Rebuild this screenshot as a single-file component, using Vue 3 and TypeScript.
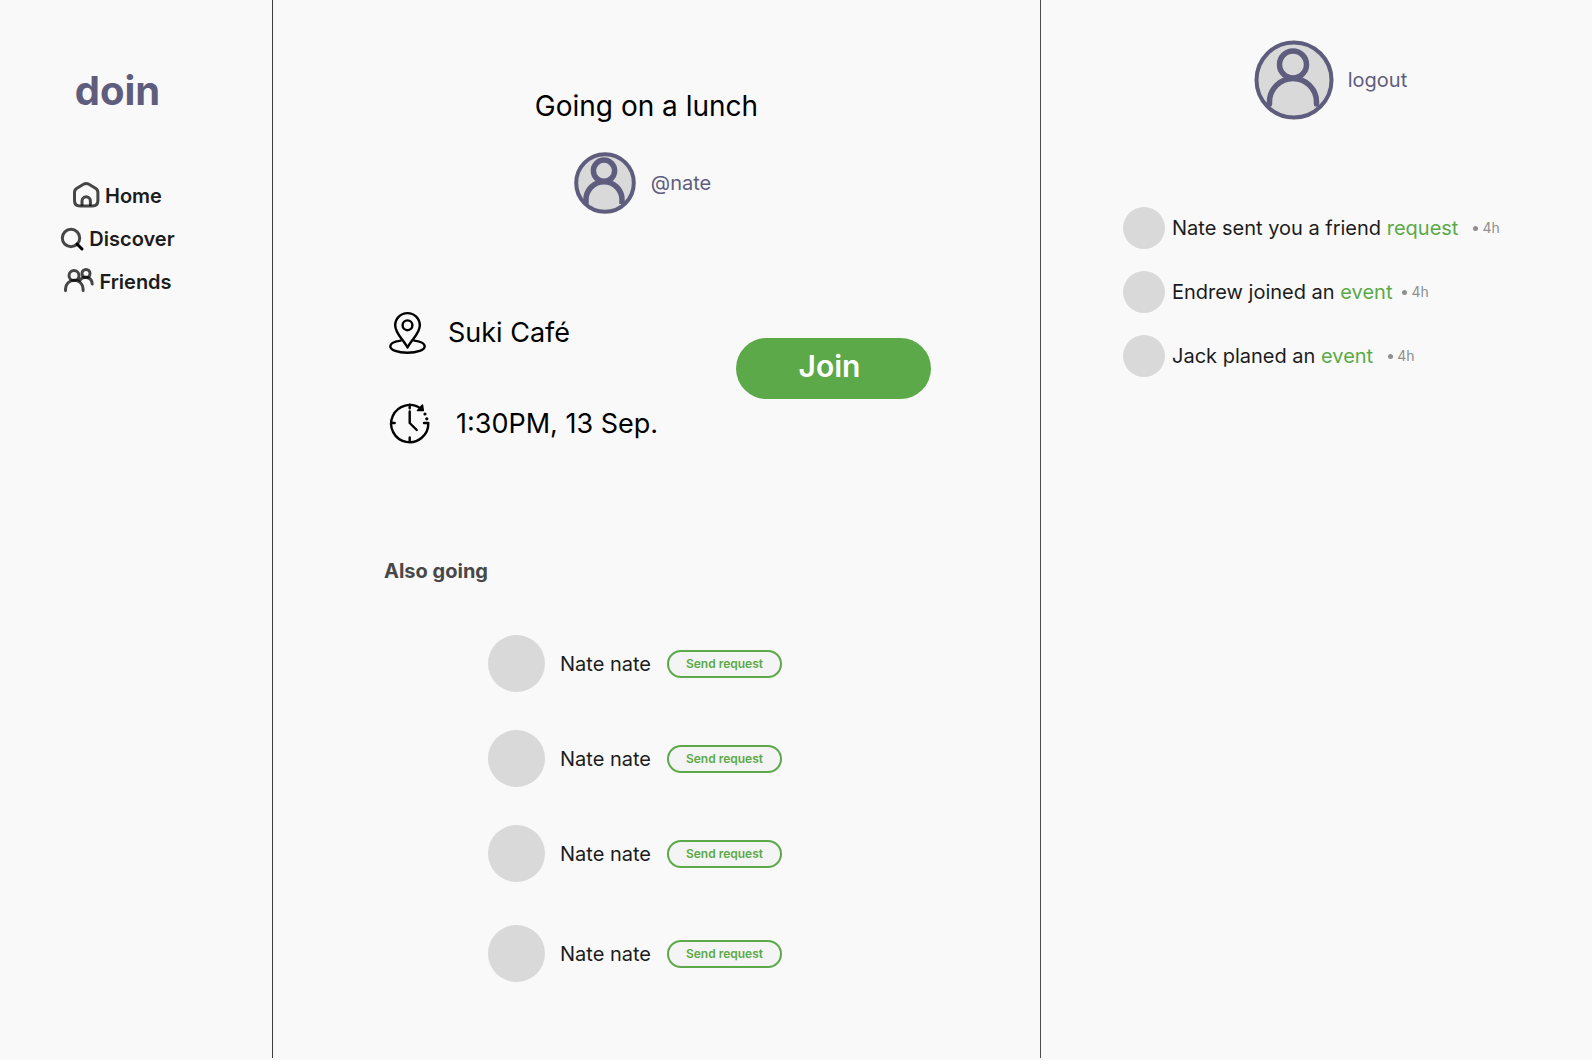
<script setup lang="ts">
import { ref } from 'vue'

interface Notice {
  id: number
  text: string
  link: string
  age: string
  tight?: boolean
}

const notices: Notice[] = [
  { id: 1, text: 'Nate sent you a friend', link: 'request', age: '4h' },
  { id: 2, text: 'Endrew joined an', link: 'event', age: '4h', tight: true },
  { id: 3, text: 'Jack planed an', link: 'event', age: '4h' },
]

const attendees = ref([
  { id: 1, name: 'Nate nate' },
  { id: 2, name: 'Nate nate' },
  { id: 3, name: 'Nate nate' },
  { id: 4, name: 'Nate nate' },
])
</script>

<template>
  <div class="page">
    <aside class="sidebar">
      <a class="brand" href="#">doin</a>
      <nav class="nav" aria-label="Main">
        <a class="nav-link" href="#home">
          <svg class="glyph" width="27" height="26" viewBox="0 0 27 26" aria-hidden="true">
            <path d="M1.500 9.500c0-2 .8-3.400 2.400-4.300l6.600-3.900c1.800-1 3.600-1 5.400 0l6.600 3.900c1.600.9 2.400 2.300 2.400 4.300v8c0 3.600-2 5.500-5.500 5.500H7c-3.500 0-5.500-1.900-5.500-5.500z" />
            <path d="M9 21.500v-3.500a4.200 4.200 0 0 1 8.400 0v3.500" />
          </svg>
          Home
        </a>
        <a class="nav-link" href="#discover">
          <svg class="glyph" width="24" height="24" viewBox="0 0 24 24" aria-hidden="true">
            <circle cx="11" cy="11" r="8.700" />
            <path class="handle" d="M17 17l5 5" />
          </svg>
          Discover
        </a>
        <a class="nav-link" href="#friends">
          <svg class="glyph" width="31" height="26" viewBox="0 0 31 26" aria-hidden="true">
            <circle cx="11" cy="6.500" r="5" />
            <path d="M2.500 21.500v-1.500a8.800 8.800 0 0 1 17.600 0v1.500" />
            <circle cx="23" cy="4.500" r="4" />
            <path d="M16.500 11.500c4-5.500 12.500-3.500 12.700 3.500" />
          </svg>
          Friends
        </a>
      </nav>
    </aside>

    <main class="event">
      <header class="event-head">
        <h1 class="title">Going on a lunch</h1>
        <a class="host" href="#nate">
          <svg width="62" height="62" viewBox="0 0 62 62" aria-hidden="true">
            <circle class="badge" cx="31" cy="31" r="28.800" />
            <circle class="figure" cx="30" cy="18.700" r="10.600" />
            <path class="figure" d="M12 52v-4.300a18 18 0 0 1 36 0V52" />
          </svg>
          @nate
        </a>
      </header>

      <section class="details">
        <ul class="facts">
          <li class="fact place">
            <svg width="40" height="44" viewBox="0 0 40 44" aria-hidden="true">
              <path d="M19.500 36.500C15.500 28.500 7.200 22.500 7.200 14.400a12.300 12.300 0 0 1 24.600 0C31.800 22.500 23.500 28.500 19.500 36.500z" />
              <circle cx="19.500" cy="14.300" r="4.900" />
              <path d="M12.700 29.600C6.500 30.400 2.300 32.300 2.300 35.200c0 3.900 7.600 6.500 17.200 6.500s17.200-2.600 17.200-6.500c0-2.900-4.200-4.800-10.400-5.600" />
            </svg>
            Suki Café
          </li>
          <li class="fact time">
            <svg width="42" height="42" viewBox="0 0 42 42" aria-hidden="true">
              <path d="M33 5.800A18.600 18.600 0 1 0 40.300 20H36" />
              <path class="tip" d="M34.500 2l.8 5.500H29.500z" />
              <path d="M21.700 1.700v3.500M3.200 20h3.500M21.700 38v-3.500M21.700 8.500V20l7 7" />
              <circle class="dot" cx="37" cy="11" r="1.600" />
              <circle class="dot" cx="38.800" cy="15.800" r="1.600" />
            </svg>
            1:30PM, 13 Sep.
          </li>
        </ul>
        <button class="join" type="button">Join</button>
      </section>

      <section class="going">
        <h2 class="subtitle">Also going</h2>
        <ul class="people">
          <li v-for="person in attendees" :key="person.id" class="person">
            <span class="face" />
            <span>{{ person.name }}</span>
            <button class="send" type="button">Send request</button>
          </li>
        </ul>
      </section>
    </main>

    <aside class="activity">
      <a class="account" href="#logout">
        <svg width="80" height="80" viewBox="0 0 80 80" aria-hidden="true">
          <circle class="badge" cx="40" cy="40" r="37.500" />
          <circle class="figure" cx="39" cy="24.500" r="13.500" />
          <path class="figure round" d="M15.500 64v-2a23.500 23.500 0 0 1 47 0v2" />
        </svg>
        logout
      </a>
      <ul class="notices">
        <li v-for="n in notices" :key="n.id" class="notice" :class="{ tight: n.tight }">
          <span class="face small" />
          <span>{{ n.text }} <a class="link" href="#activity">{{ n.link }}</a></span>
          <span class="age">{{ n.age }}</span>
        </li>
      </ul>
    </aside>
  </div>
</template>

<style>
body {
  background: #f9f9f9;
}
</style>

<style scoped>
.page {
  --purple: #5f5d7e;
  --green: #5ba948;
  display: grid;
  grid-template-columns: 273fr 768fr 551fr;
  min-height: calc(100vh - 2px);
  font-family: Inter, "Liberation Sans", sans-serif;
  font-size: 20px;
  line-height: 24px;
  color: #1c1c1c;
}

.page * {
  box-sizing: border-box;
}

ul,
h1,
h2 {
  margin: 0;
  padding: 0;
  list-style: none;
}

a {
  color: inherit;
  text-decoration: none;
}

button {
  font-family: inherit;
  cursor: pointer;
}

svg {
  flex: none;
  fill: none;
  overflow: visible;
}

.sidebar {
  display: flex;
  flex-direction: column;
  align-items: center;
  gap: 59px;
  padding: 67px 37px 0 0;
  border-right: 1px solid #3c3c3c;
}

.brand {
  color: var(--purple);
  font-size: 40px;
  line-height: 48px;
  font-weight: 700;
}

.nav {
  display: flex;
  flex-direction: column;
  align-items: center;
}

.nav-link {
  display: flex;
  align-items: center;
  gap: 5px;
  height: 43px;
  font-weight: 600;
}

.glyph {
  stroke: #000;
  stroke-opacity: 0.72;
  stroke-width: 3;
  stroke-linecap: round;
}

.handle {
  stroke-opacity: 1;
}

.event {
  padding: 88px 109px 64px 111px;
  border-right: 1px solid #4c4c4c;
}

.event-head {
  display: flex;
  flex-direction: column;
  align-items: center;
  gap: 28px;
  padding-right: 22px;
}

.title {
  color: #000;
  font-size: 28px;
  line-height: 36px;
  font-weight: 400;
}

.host,
.account {
  display: flex;
  align-items: center;
  gap: 14px;
  color: var(--purple);
}

.host {
  gap: 15px;
  padding-right: 8px;
}

.badge {
  fill: #d9d9d9;
  stroke: var(--purple);
  stroke-width: 4;
}

.figure {
  stroke: var(--purple);
  stroke-width: 5.5;
}

.round {
  stroke-linecap: round;
}

.details {
  display: flex;
  justify-content: space-between;
  align-items: flex-start;
  margin-top: 97px;
}

.facts {
  display: flex;
  flex-direction: column;
  gap: 48px;
  padding-left: 4px;
}

.fact {
  display: flex;
  align-items: center;
  gap: 20px;
  color: #000;
  font-size: 27px;
  line-height: 36px;
}

.time {
  gap: 26px;
}

.fact svg {
  stroke: #000;
  stroke-width: 2.4;
  stroke-linecap: round;
  stroke-linejoin: round;
}

.fact .dot {
  fill: #000;
  stroke: none;
}

.fact .tip {
  fill: #000;
  stroke-width: 1.5;
}

.join {
  width: 195px;
  height: 61px;
  margin-top: 27px;
  padding: 0 8px 6px 0;
  border: 0;
  border-radius: 31px;
  background: var(--green);
  color: #fff;
  font-size: 30px;
  line-height: 36px;
  font-weight: 600;
}

.going {
  margin-top: 114px;
}

.subtitle {
  color: #484848;
  font-size: 20px;
  line-height: 24px;
  font-weight: 700;
}

.people {
  display: flex;
  flex-direction: column;
  gap: 38px;
  margin-top: 52px;
  padding-left: 104px;
}

.person {
  display: flex;
  align-items: center;
  gap: 15px;
}

.person:last-child {
  margin-top: 5px;
}

.face {
  flex: none;
  width: 57px;
  height: 57px;
  border-radius: 50%;
  background: #d9d9d9;
}

.face.small {
  width: 42px;
  height: 42px;
}

.send {
  width: 115px;
  height: 28px;
  margin-left: 1px;
  padding: 0;
  border: 2px solid var(--green);
  border-radius: 14px;
  background: #f4f4f4;
  color: var(--green);
  font-size: 12px;
  line-height: 16px;
  font-weight: 600;
}

.activity {
  padding: 40px 16px 0 82px;
}

.account {
  justify-content: center;
  padding-right: 38px;
}

.notices {
  display: flex;
  flex-direction: column;
  gap: 22px;
  margin-top: 87px;
}

.notice {
  display: flex;
  align-items: center;
  gap: 7px;
}

.link {
  color: var(--green);
}

.age {
  display: flex;
  align-items: center;
  gap: 4px;
  margin-left: 8px;
  color: #8f8f8f;
  font-size: 14px;
}

.tight .age {
  margin-left: 3px;
}

.age::before {
  content: "";
  width: 5px;
  height: 5px;
  border-radius: 50%;
  background: currentColor;
}
</style>
